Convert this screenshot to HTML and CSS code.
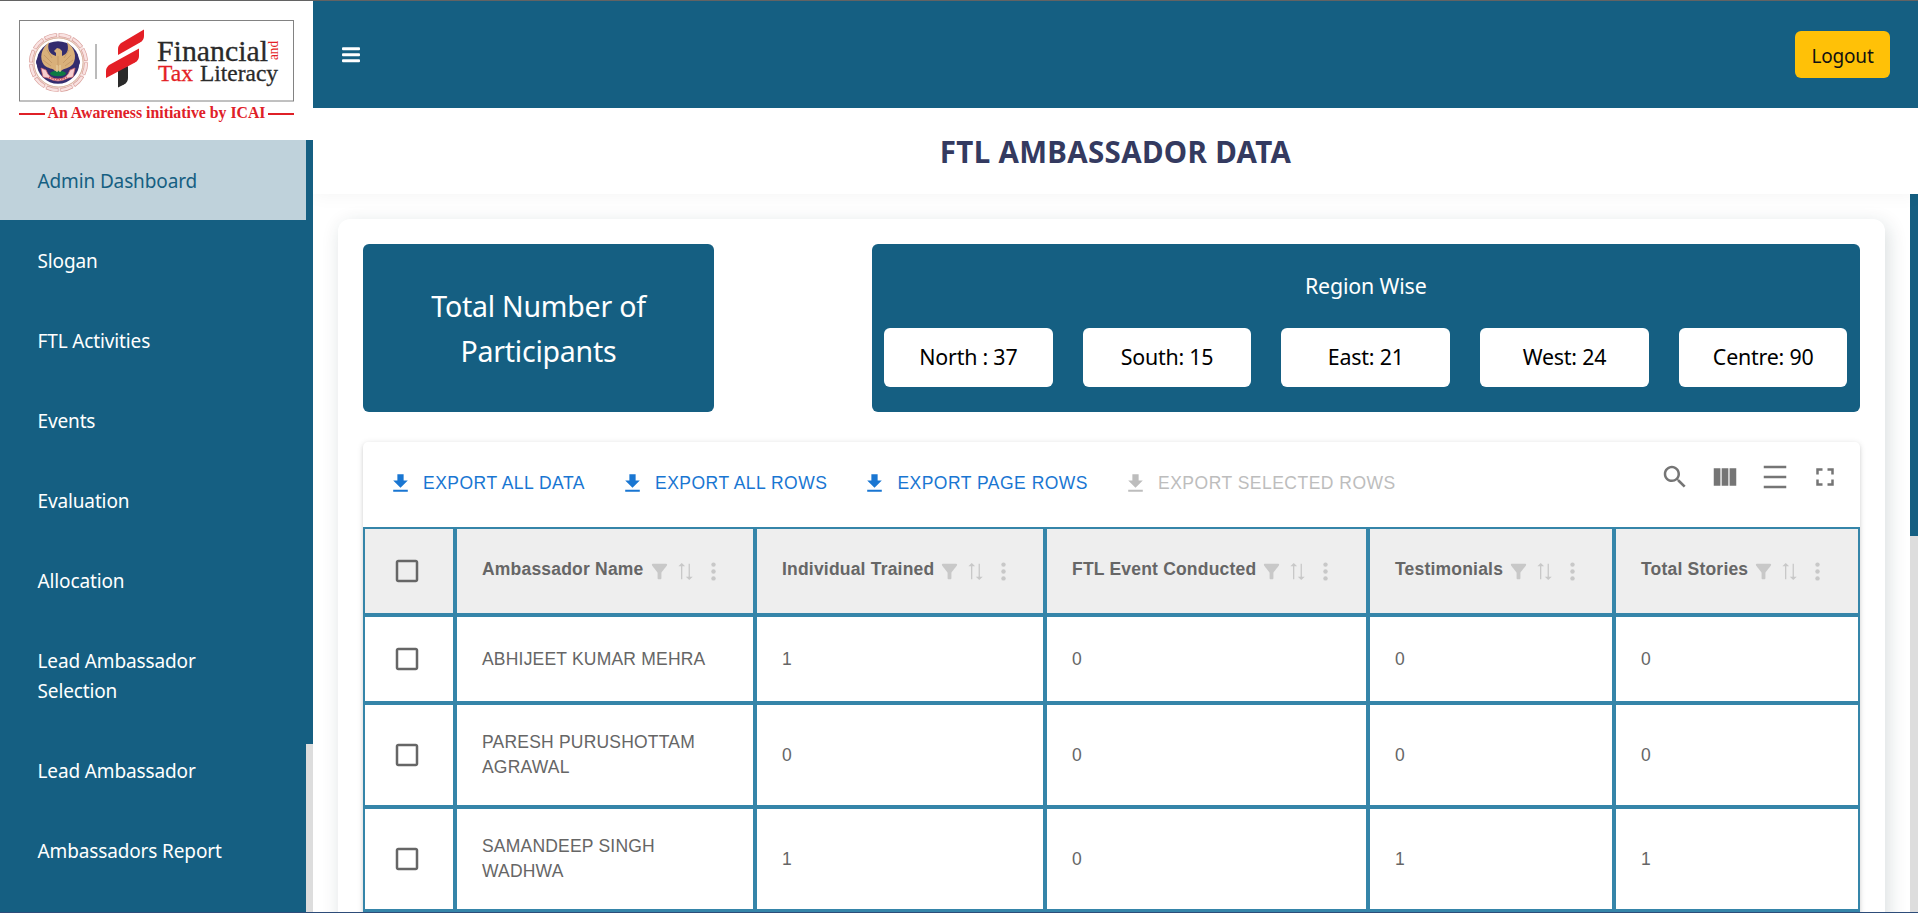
FILE: index.html
```html
<!DOCTYPE html>
<html lang="en">
<head>
<meta charset="utf-8">
<title>FTL Ambassador Data</title>
<link rel="stylesheet" href="styles.css">
</head>
<body>
<svg class="defs" aria-hidden="true">
  <symbol id="i-download" viewBox="0 0 24 24"><path d="M5 20h14v-2H5v2zM19 9h-4V3H9v6H5l7 7 7-7z"/></symbol>
  <symbol id="i-box" viewBox="0 0 24 24"><path d="M19 5v14H5V5h14m0-2H5c-1.1 0-2 .9-2 2v14c0 1.1.9 2 2 2h14c1.1 0 2-.9 2-2V5c0-1.1-.9-2-2-2z"/></symbol>
  <symbol id="i-filter" viewBox="0 0 24 24"><path d="M4.25 5.61C6.27 8.2 10 13 10 13v6c0 .55.45 1 1 1h2c.55 0 1-.45 1-1v-6s3.72-4.8 5.74-7.39c.51-.66.04-1.61-.79-1.61H5.04c-.83 0-1.3.95-.79 1.61z"/></symbol>
  <symbol id="i-sort" viewBox="0 0 16 18"><path d="M3.2 17.2V3.4H.4L4 0l3.6 3.4H4.6v13.8zM11.3.8v13.8H8.3L12 18l3.700-3.400h-3V.8z"/></symbol>
  <symbol id="i-dots" viewBox="0 0 5 19"><circle cx="2.5" cy="2.6" r="2.2"/><circle cx="2.5" cy="9.5" r="2.2"/><circle cx="2.5" cy="16.4" r="2.2"/></symbol>
</svg>
<div class="edge-top"></div>
<div class="app">
  <aside class="sidebar">
    <div class="brand">
      <svg class="logo" width="313" height="139" viewBox="0 1 313 139">
        <rect x="19.5" y="20.5" width="274" height="80.5" fill="#fff" stroke="#828282"/>
        <circle cx="58.5" cy="62.5" r="26.6" fill="none" stroke="#f8e4e3" stroke-width="5"/>
        <circle cx="58.5" cy="62.5" r="27.6" fill="none" stroke="#d9a09b" stroke-width="4" stroke-dasharray="12.4 2.05"/>
        <circle cx="58.5" cy="62.5" r="27.6" fill="none" stroke="#f9e2e1" stroke-width="2.6" stroke-dasharray="11.2 3.25" stroke-dashoffset="-.6"/>
        <circle cx="58.5" cy="62.5" r="24.6" fill="none" stroke="#cda488" stroke-width=".8"/>
        <g fill="#332c6e"><circle cx="58" cy="62.5" r="21.3"/><circle cx="41" cy="62" r="5"/><circle cx="75" cy="62" r="5"/></g>
        <path d="M49 42C41 49 39 58 44 65C48 69 53 68 55 71H61C64 68 69 69 73 64C77 57 75 48 67 42C69 49 68 54 62 56V51Q60 48 57 48L54 51L56 53V56C49 54 47 49 49 42Z" fill="#d9b07a"/>
        <path d="M44 55l8 8M43 60l8 6M47 50l5 8M71 55l-8 8M73 60l-8 6M69 50l-5 8M58 56v10" stroke="#b88c5a" stroke-width=".6"/>
        <path d="M41 68L46 70Q49 79 58 79Q67 79 70 70L75 68L73 77L68 78Q58 84 48 78L43 77Z" fill="#f6cfd0" stroke="#d4666b" stroke-width=".7"/>
        <ellipse cx="58" cy="73.500" rx="8" ry="2.800" fill="#0d7a43"/>
        <path d="M49 77Q58 82 67 77" fill="none" stroke="#cc5059" stroke-width="1.4" stroke-dasharray="1.5 1"/>
        <path d="M57 65v7M60 65v7" stroke="#e8cfa0" stroke-width="1.2"/>
        <path d="M96 44v35" stroke="#777"/>
        <path d="M118 55V49Q118 45 122 42.500L144 29.500V36Q144 40 140 42.500Z" fill="#e41f26"/>
        <path d="M118 87.500V70L128 66V78Q128 82 124 84.500Z" fill="#2a2a2a"/>
        <path d="M106 78V71Q106 67 110 64.500L139 48.500V56Q139 60 135 62.500Z" fill="#e41f26"/>
        <g font-family="'Liberation Serif', serif">
          <text x="157" y="61" font-size="29" fill="#2a2a2a" stroke="#2a2a2a" stroke-width=".3" textLength="111" lengthAdjust="spacingAndGlyphs">Financial</text>
          <text x="158" y="81" font-size="23.500" fill="#e41f26" stroke="#e41f26" stroke-width=".3" textLength="35" lengthAdjust="spacingAndGlyphs">Tax</text>
          <text x="200" y="81" font-size="23.500" fill="#2a2a2a" stroke="#2a2a2a" stroke-width=".3" textLength="78" lengthAdjust="spacingAndGlyphs">Literacy</text>
          <text transform="translate(278 60) rotate(-90)" font-size="14.500" fill="#e41f26" textLength="19" lengthAdjust="spacingAndGlyphs">and</text>
          <text x="47.500" y="118" font-size="17" font-weight="bold" fill="#df2027" textLength="218" lengthAdjust="spacingAndGlyphs">An Awareness initiative by ICAI</text>
        </g>
        <path d="M19 114H45M268 114H294" stroke="#df2027" stroke-width="2"/>
      </svg>
    </div>
    <div class="nav-row">
      <nav class="nav">
        <a class="nav-item active">Admin Dashboard</a>
        <a class="nav-item">Slogan</a>
        <a class="nav-item">FTL Activities</a>
        <a class="nav-item">Events</a>
        <a class="nav-item">Evaluation</a>
        <a class="nav-item">Allocation</a>
        <a class="nav-item">Lead Ambassador<br>Selection</a>
        <a class="nav-item">Lead Ambassador</a>
        <a class="nav-item">Ambassadors Report</a>
      </nav>
      <div class="scroll nav-scroll"><div class="thumb"></div></div>
    </div>
  </aside>
  <div class="main">
    <header class="topbar">
      <svg width="18" height="16" viewBox="0 0 18 16" fill="#fff"><rect y=".3" width="18" height="3" rx="1"/><rect y="6.300" width="18" height="3" rx="1"/><rect y="12.300" width="18" height="3" rx="1"/></svg>
      <button class="logout">Logout</button>
    </header>
    <div class="titlebar"><h1 class="title">FTL AMBASSADOR DATA</h1></div>
    <div class="content-row">
      <div class="content">
        <section class="card">
          <div class="stats">
            <div class="total">Total Number of<br>Participants</div>
            <div class="regions">
              <div class="regions-title">Region Wise</div>
              <div class="tiles">
                <div class="tile">North : 37</div>
                <div class="tile">South: 15</div>
                <div class="tile">East: 21</div>
                <div class="tile">West: 24</div>
                <div class="tile">Centre: 90</div>
              </div>
            </div>
          </div>
          <div class="paper">
            <div class="toolbar">
              <div class="exports">
                <span class="export"><svg class="dl"><use href="#i-download"/></svg>EXPORT ALL DATA</span>
                <span class="export"><svg class="dl"><use href="#i-download"/></svg>EXPORT ALL ROWS</span>
                <span class="export"><svg class="dl"><use href="#i-download"/></svg>EXPORT PAGE ROWS</span>
                <span class="export disabled"><svg class="dl"><use href="#i-download"/></svg>EXPORT SELECTED ROWS</span>
              </div>
              <div class="tools">
                <svg class="tool" viewBox="0 0 24 24"><path d="M15.500 14h-.79l-.28-.27C15.410 12.590 16 11.110 16 9.500 16 5.910 13.090 3 9.500 3S3 5.910 3 9.500 5.910 16 9.500 16c1.610 0 3.090-.59 4.230-1.570l.27.28v.79l5 4.990L20.490 19l-4.990-5zm-6 0C7.010 14 5 11.990 5 9.500S7.010 5 9.500 5 14 7.010 14 9.500 11.990 14 9.500 14z"/></svg>
                <svg class="tool" viewBox="0 0 24 24"><path d="M14.670 5v14H9.330V5h5.340zm1 14H21V5h-5.330v14zm-7.340 0V5H3v14h5.330z"/></svg>
                <svg class="tool" viewBox="0 0 24 24"><path d="M3 3h18v2H3V3zm0 16h18v2H3v-2zm0-8h18v2H3v-2z"/></svg>
                <svg class="tool" viewBox="0 0 24 24"><path d="M7 14H5v5h5v-2H7v-3zm-2-4h2V7h3V5H5v5zm12 7h-3v2h5v-5h-2v3zM14 5v2h3v3h2V5h-5z"/></svg>
              </div>
            </div>
            <table class="grid">
              <colgroup><col class="c1"><col class="c2"><col class="c3"><col class="c4"><col class="c5"><col class="c6"></colgroup>
              <thead>
                <tr>
                  <th class="pick"><svg class="box"><use href="#i-box"/></svg></th>
                  <th><div class="head"><span class="label">Ambassador Name</span><svg class="filter"><use href="#i-filter"/></svg><svg class="sort"><use href="#i-sort"/></svg><svg class="dots"><use href="#i-dots"/></svg></div></th>
                  <th><div class="head"><span class="label">Individual Trained</span><svg class="filter"><use href="#i-filter"/></svg><svg class="sort"><use href="#i-sort"/></svg><svg class="dots"><use href="#i-dots"/></svg></div></th>
                  <th><div class="head"><span class="label">FTL Event Conducted</span><svg class="filter"><use href="#i-filter"/></svg><svg class="sort"><use href="#i-sort"/></svg><svg class="dots"><use href="#i-dots"/></svg></div></th>
                  <th><div class="head"><span class="label">Testimonials</span><svg class="filter"><use href="#i-filter"/></svg><svg class="sort"><use href="#i-sort"/></svg><svg class="dots"><use href="#i-dots"/></svg></div></th>
                  <th><div class="head"><span class="label">Total Stories</span><svg class="filter"><use href="#i-filter"/></svg><svg class="sort"><use href="#i-sort"/></svg><svg class="dots"><use href="#i-dots"/></svg></div></th>
                </tr>
              </thead>
              <tbody>
                <tr class="single"><td class="pick"><svg class="box"><use href="#i-box"/></svg></td><td>ABHIJEET KUMAR MEHRA</td><td>1</td><td>0</td><td>0</td><td>0</td></tr>
                <tr class="double"><td class="pick"><svg class="box"><use href="#i-box"/></svg></td><td>PARESH PURUSHOTTAM AGRAWAL</td><td>0</td><td>0</td><td>0</td><td>0</td></tr>
                <tr class="double"><td class="pick"><svg class="box"><use href="#i-box"/></svg></td><td>SAMANDEEP SINGH WADHWA</td><td>1</td><td>0</td><td>1</td><td>1</td></tr>
                <tr class="single"><td></td><td></td><td></td><td></td><td></td><td></td></tr>
              </tbody>
            </table>
          </div>
        </section>
      </div>
      <div class="scroll page-scroll"><div class="thumb"></div></div>
    </div>
  </div>
</div>
<div class="edge-bottom"></div>
</body>
</html>
```
FILE: styles.css
```css
* { box-sizing: border-box; }
body {
  margin: 0;
  width: 1918px;
  height: 913px;
  overflow: hidden;
  display: flex;
  flex-direction: column;
  background: #fff;
  font-family: "Noto Sans", "Open Sans", sans-serif;
}
.defs { display: none; }
.edge-top { height: 1px; flex: none; background: #636363; }
.edge-bottom { height: 1px; flex: none; background: #2d4c79; }
.app { display: flex; height: 911px; overflow: hidden; }

.sidebar { width: 313px; flex: none; display: flex; flex-direction: column; background: #155f82; position: relative; z-index: 2; }
.brand { height: 139px; flex: none; background: #fff; }
.logo { display: block; }
.nav-row { flex: 1; min-height: 0; display: flex; }
.nav { width: 306px; }
.nav-item {
  display: block;
  padding: 26px 37px 24px 37.5px;
  font-size: 19px;
  line-height: 30px;
  letter-spacing: -0.007em;
  color: #fff;
}
.nav-item.active { background: #bfd2db; color: #155f82; }
.scroll { background: #dddddd; }
.scroll .thumb { background: #155f82; }
.nav-scroll { width: 7px; }
.nav-scroll .thumb { height: 604px; }

.main { flex: 1; min-width: 0; display: flex; flex-direction: column; }
.topbar {
  position: relative;
  z-index: 2;
  height: 107px;
  flex: none;
  padding: 30px 28px 30px 29px;
  display: flex;
  align-items: flex-start;
  justify-content: space-between;
  background: #155f82;
}
.topbar svg { margin-top: 16px; }
.logout {
  width: 95px;
  height: 47px;
  padding: 3px 0 0;
  border: 0;
  border-radius: 6px;
  background: #ffc107;
  color: #111;
  font: 19px "Noto Sans", sans-serif;
  letter-spacing: -0.01em;
}
.titlebar {
  position: relative;
  z-index: 1;
  height: 86px;
  flex: none;
  display: flex;
  justify-content: center;
  background: #fff;
  box-shadow: 0 0 19px rgba(0, 0, 0, 0.05);
}
.title { margin: 21px 0 0; font-size: 29.5px; line-height: 45px; letter-spacing: 0.011em; color: #343a60; }

.content-row { flex: 1; min-height: 0; display: flex; overflow: hidden; }
.content { width: 1597px; flex: none; padding: 25px; background: #fff; overflow: hidden; }
.page-scroll { width: 8px; }
.page-scroll .thumb { height: 342px; }
.card {
  height: 900px;
  padding: 25px;
  border-radius: 12px;
  background: #fff;
  box-shadow: 3px 5px 19px rgba(20, 50, 55, 0.16);
}
.stats { display: flex; justify-content: space-between; height: 168px; }
.total {
  width: 351px;
  padding-top: 40px;
  border-radius: 6px;
  background: #155f82;
  color: #fff;
  font-size: 28.5px;
  line-height: 45px;
  letter-spacing: -0.008em;
  text-align: center;
}
.regions { width: 988px; padding: 25px 12.5px 25px 12px; border-radius: 6px; background: #155f82; }
.regions-title { height: 59px; font-size: 21.4px; line-height: 34px; letter-spacing: -0.008em; color: #fff; text-align: center; }
.tiles { display: grid; grid-template-columns: repeat(5, 1fr); gap: 30px; }
.tile {
  height: 59px;
  border-radius: 6px;
  background: #fff;
  color: #000;
  font-size: 21.4px;
  line-height: 57px;
  letter-spacing: -0.01em;
  text-align: center;
}

.paper {
  margin-top: 30px;
  border-radius: 5px;
  background: #fff;
  box-shadow: 0 2px 4px -1px rgba(0, 0, 0, 0.14), 0 1px 6px rgba(0, 0, 0, 0.12);
  font-family: "Liberation Sans", Arial, sans-serif;
}
.toolbar { height: 85px; padding: 20px 20px 0 25px; display: flex; justify-content: space-between; }
.exports { display: flex; gap: 35px; padding-top: 8px; height: 36px; }
.export { display: flex; align-items: center; font-size: 17.5px; line-height: 27px; letter-spacing: 0.028em; color: #1976d2; height: 27px; }
.export.disabled { color: #bdbdbd; }
.dl { width: 25px; height: 25px; margin-right: 10px; fill: currentColor; }
.tools { display: flex; gap: 20px; }
.tool { width: 30px; height: 30px; fill: #757575; }

.grid { width: 1497px; table-layout: fixed; border-collapse: separate; border-spacing: 0; font-size: 17.5px; line-height: 25px; letter-spacing: 0.0115em; color: #666; }
.c1 { width: 92px; }
.c2 { width: 300px; }
.c3 { width: 290px; }
.c4 { width: 323px; }
.c5 { width: 246px; }
.c6 { width: 246px; }
.grid th, .grid td { padding: 0 25px; border: 2px solid #3585a9; text-align: left; vertical-align: middle; }
.grid th { height: 88px; background: #eeeeee; }
.grid th.pick, .grid td.pick { padding: 0 0 0 27px; }
.single td { height: 88px; }
.double td { height: 104px; }
.box { display: block; width: 30px; height: 30px; fill: #666; }
.head { display: flex; align-items: center; white-space: nowrap; fill: #c8c8c8; }
.label { padding-bottom: 4px; }
.filter { width: 23px; height: 23px; margin-left: 4px; }
.sort { width: 15px; height: 17px; margin-left: 7px; }
.dots { width: 5px; height: 19px; margin-left: 18px; }
```
